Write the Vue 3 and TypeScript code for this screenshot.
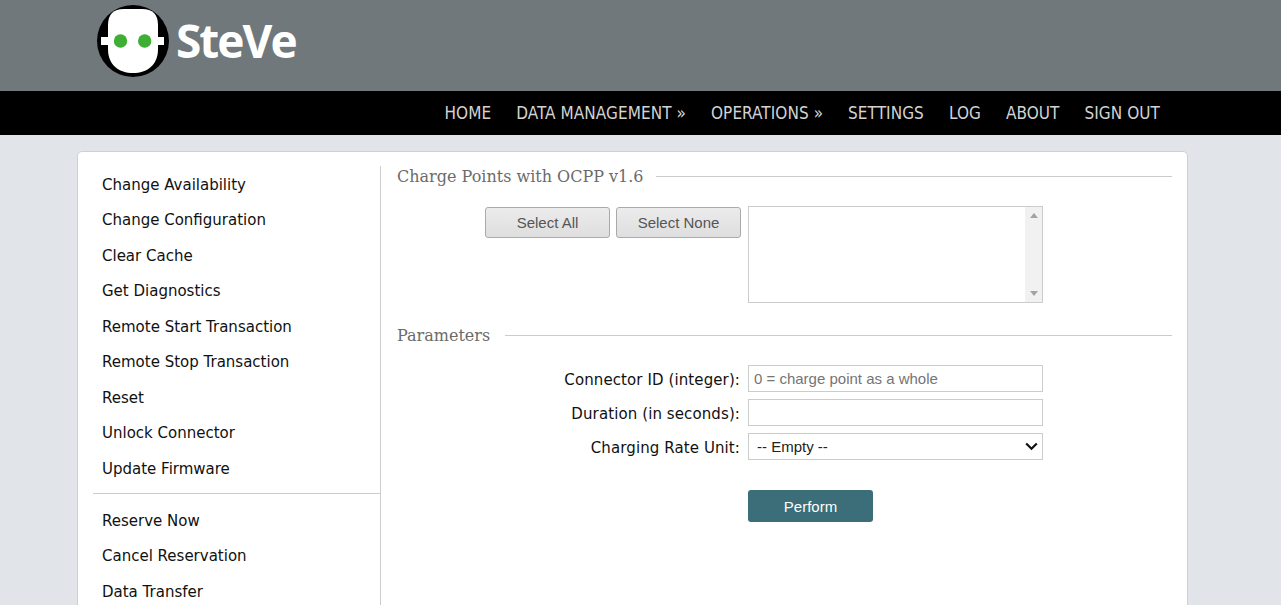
<script setup lang="ts">
const navItems: string[] = ['HOME', 'DATA MANAGEMENT »', 'OPERATIONS »', 'SETTINGS', 'LOG', 'ABOUT', 'SIGN OUT']

const firstMenu: string[] = [
  'Change Availability',
  'Change Configuration',
  'Clear Cache',
  'Get Diagnostics',
  'Remote Start Transaction',
  'Remote Stop Transaction',
  'Reset',
  'Unlock Connector',
  'Update Firmware',
]
const secondMenu: string[] = ['Reserve Now', 'Cancel Reservation', 'Data Transfer']
</script>

<template>
  <div class="page">
    <header class="top">
      <div class="logo">
        <svg class="logo-mark" width="72" height="72" viewBox="0 0 72 72">
          <circle cx="36" cy="36" r="36" fill="#000" />
          <path d="M11 20 Q11 4 27 4 H45 Q61 4 61 20 V44 C61 60 50 68 36 68 C22 68 11 60 11 44 Z" fill="#fff" />
          <rect x="4" y="32" width="63" height="8" fill="#fff" />
          <circle cx="23.5" cy="36" r="6.7" fill="#3fae35" />
          <circle cx="47.7" cy="36" r="6.7" fill="#3fae35" />
        </svg>
        <span class="logo-text">SteVe</span>
      </div>
    </header>

    <nav class="nav">
      <a v-for="item in navItems" :key="item" class="nav-link">{{ item }}</a>
    </nav>

    <div class="card">
      <aside class="side">
        <ul class="menu">
          <li v-for="item in firstMenu" :key="item">{{ item }}</li>
        </ul>
        <hr class="side-line" />
        <ul class="menu">
          <li v-for="item in secondMenu" :key="item">{{ item }}</li>
        </ul>
      </aside>

      <section class="main">
        <h3 class="section-title"><span>Charge Points with OCPP v1.6</span></h3>
        <div class="row-select">
          <div class="select-btns">
            <button class="btn-grey">Select All</button>
            <button class="btn-grey">Select None</button>
          </div>
          <div class="listbox">
            <div class="list-track">
              <svg width="8" height="5" viewBox="0 0 8 5"><path d="M4 0 L8 5 H0 Z" fill="#a3a3a3" /></svg>
              <svg width="8" height="5" viewBox="0 0 8 5"><path d="M0 0 H8 L4 5 Z" fill="#a3a3a3" /></svg>
            </div>
          </div>
        </div>

        <h3 class="section-title second"><span>Parameters</span></h3>
        <div class="form">
          <label>Connector ID (integer):</label>
          <input class="field" type="text" placeholder="0 = charge point as a whole" />
          <label>Duration (in seconds):</label>
          <input class="field" type="text" />
          <label>Charging Rate Unit:</label>
          <div class="select-wrap">
            <select class="field field-select">
              <option>-- Empty --</option>
            </select>
            <svg class="select-arrow" width="13" height="9" viewBox="0 0 13 9">
              <path d="M1.2 1.5 L6.5 6.8 L11.8 1.5" fill="none" stroke="#111" stroke-width="2.2" />
            </svg>
          </div>
          <span></span>
          <button class="btn-perform">Perform</button>
        </div>
      </section>
    </div>
  </div>
</template>

<style>
html,
body {
  margin: 0;
  overflow: hidden;
  background: #e1e5e9;
}
</style>

<style scoped>
.page {
  height: 605px;
  overflow: hidden;
  font-family: "DejaVu Sans", Verdana, sans-serif;
}

/* header */
.top {
  height: 91px;
  background: #70787c;
  padding-left: 97px;
  box-sizing: border-box;
}
.logo {
  display: flex;
  align-items: center;
  height: 82px;
  gap: 7px;
}
.logo-text {
  font-family: "Open Sans", sans-serif;
  font-weight: 700;
  font-size: 46px;
  letter-spacing: -2px;
  color: #fff;
  margin-top: -2px;
}

/* nav */
.nav {
  height: 44px;
  background: #000;
  display: flex;
  justify-content: flex-end;
  align-items: center;
  gap: 25px;
  padding-right: 121px;
}
.nav-link {
  color: #d3d3d3;
  font-size: 17px;
  letter-spacing: 0.07px;
  font-family: "DejaVu Sans Condensed", "DejaVu Sans", sans-serif;
}

/* card */
.card {
  display: flex;
  width: 1079px;
  min-height: 600px;
  margin: 16px 0 0 77px;
  padding: 14px 15px 0;
  background: #fff;
  border: 1px solid #cdd1d5;
  border-radius: 5px;
}

/* sidebar */
.side {
  width: 287px;
  flex-shrink: 0;
  padding-top: 1.5px;
}
.menu {
  list-style: none;
  margin: 0;
  padding: 0 0 0 9px;
}
.menu li {
  height: 35.5px;
  line-height: 35.5px;
  font-size: 15px;
  color: #111;
}
.side-line {
  margin: 5.5px 0 10px;
  border: 0;
  border-top: 1px solid #ccc;
}

/* main column */
.main {
  flex: 1;
  border-left: 1px solid #ccc;
  padding-left: 16px;
}
.section-title {
  display: flex;
  align-items: center;
  gap: 12px;
  margin: 0;
  height: 20px;
  font-family: "DejaVu Serif", serif;
  font-size: 16px;
  font-weight: 400;
  color: #6b6b6b;
}
.section-title::after {
  content: '';
  flex: 1;
  border-top: 1px solid #ccc;
}
.section-title.second {
  margin-top: 22px;
  gap: 15px;
}
.row-select {
  display: flex;
  justify-content: flex-end;
  gap: 7px;
  width: 646px;
  margin-top: 20px;
}
.select-btns {
  display: flex;
  gap: 6px;
  align-items: flex-start;
  padding-top: 1px;
}
.btn-grey {
  width: 125px;
  height: 31px;
  border: 1px solid #aaa;
  border-radius: 3px;
  background: linear-gradient(#ececec, #dedede);
  color: #555;
  font-family: "Liberation Sans", Arial, sans-serif;
  font-size: 15px;
  padding: 0;
}
.listbox {
  width: 295px;
  height: 97px;
  box-sizing: border-box;
  border: 1px solid #ccc;
  display: flex;
  justify-content: flex-end;
}
.list-track {
  width: 17px;
  background: #f1f1f1;
  display: flex;
  flex-direction: column;
  justify-content: space-between;
  align-items: center;
  padding: 6px 0;
}

/* form */
.form {
  display: grid;
  grid-template-columns: 343px 295px;
  column-gap: 8px;
  row-gap: 7px;
  margin-top: 20px;
  align-items: center;
}
.form label {
  text-align: right;
  font-size: 15px;
  letter-spacing: 0.1px;
  color: #111;
  padding-top: 2px;
}
.field {
  width: 295px;
  height: 27px;
  box-sizing: border-box;
  border: 1px solid #ccc;
  padding: 0 5px;
  font-family: "Liberation Sans", Arial, sans-serif;
  font-size: 15px;
  color: #222;
  background: #fff;
  outline: none;
  border-radius: 0;
}
.field::placeholder {
  color: #757575;
}
.select-wrap {
  position: relative;
  height: 27px;
}
.field-select {
  display: block;
  appearance: none;
  padding-left: 8px;
}
.select-arrow {
  position: absolute;
  right: 5px;
  top: 9px;
  pointer-events: none;
}
.btn-perform {
  grid-column: 2;
  width: 125px;
  height: 32px;
  margin-top: 23px;
  border: 0;
  border-radius: 3px;
  background: #3b6e79;
  color: #fff;
  font-family: "Liberation Sans", Arial, sans-serif;
  font-size: 15px;
  padding: 0;
}
</style>
